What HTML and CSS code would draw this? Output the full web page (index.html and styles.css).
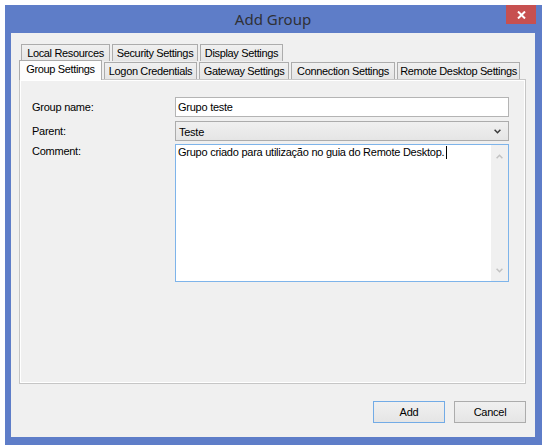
FILE: index.html
```html
<!DOCTYPE html>
<html>
<head>
<meta charset="utf-8">
<link rel="stylesheet" href="styles.css">
</head>
<body>
<div class="window">
  <div class="titlebar">
    <div class="title">Add Group</div>
    <div class="close">
      <svg width="9" height="8" viewBox="0 0 9 8"><path d="M1 0.5 L8 7.5 M8 0.5 L1 7.5" stroke="#fff" stroke-width="2" fill="none"/></svg>
    </div>
  </div>
  <div class="client">
    <div class="tabrow row1">
      <div class="tab w-local">Local Resources</div>
      <div class="tab w-sec">Security Settings</div>
      <div class="tab w-disp">Display Settings</div>
    </div>
    <div class="tabrow row2">
      <div class="tab sel w-group">Group Settings</div>
      <div class="tab w-logon">Logon Credentials</div>
      <div class="tab w-gate">Gateway Settings</div>
      <div class="tab w-conn">Connection Settings</div>
      <div class="tab w-remote">Remote Desktop Settings</div>
    </div>
    <div class="panel">
      <div class="form">
        <div class="lbl">Group name:</div>
        <div class="textbox">Grupo teste</div>
        <div class="lbl">Parent:</div>
        <div class="combo"><span>Teste</span>
          <svg width="7" height="5" viewBox="0 0 7 5"><polyline points="0.6,0.8 3.5,3.7 6.4,0.8" stroke="#3a3a3a" stroke-width="1.5" fill="none"/></svg>
        </div>
        <div class="lbl lbl-top">Comment:</div>
        <div class="textarea">
          <div class="ta-text">Grupo criado para utilização no guia do Remote Desktop.<span class="caret"></span></div>
          <div class="vscroll">
            <svg width="7" height="5" viewBox="0 0 7 5"><polyline points="0.6,4.2 3.5,1.3 6.4,4.2" stroke="#c2c2c2" stroke-width="1.5" fill="none"/></svg>
            <svg width="7" height="5" viewBox="0 0 7 5"><polyline points="0.6,0.8 3.5,3.7 6.4,0.8" stroke="#c2c2c2" stroke-width="1.5" fill="none"/></svg>
          </div>
        </div>
      </div>
    </div>
    <div class="buttons">
      <div class="btn default">Add</div>
      <div class="btn">Cancel</div>
    </div>
  </div>
</div>
</body>
</html>
```
FILE: styles.css
```css
html, body {
  margin: 0;
  background: #ffffff;
}
body {
  font-family: "Liberation Sans", Arial, sans-serif;
  font-size: 11px;
  letter-spacing: -0.25px;
  color: #000;
}
.window {
  margin: 5px 0 0 5px;
  width: 537px;
  height: 440px;
  box-sizing: border-box;
  background: #5e7dc8;
  padding: 0 7px 8px 6px;
  display: flex;
  flex-direction: column;
}
.titlebar {
  height: 28px;
  flex: none;
  display: grid;
  grid-template-columns: 1fr auto 1fr;
}
.title {
  grid-column: 2;
  line-height: 28px;
  font-family: "Noto Sans", "Liberation Sans", sans-serif;
  font-size: 15px;
  letter-spacing: 0;
  color: #2f3036;
}
.close {
  grid-column: 3;
  justify-self: end;
  align-self: start;
  margin-right: -1px;
  width: 30px;
  height: 19px;
  background: #c75050;
  display: flex;
  align-items: center;
  justify-content: center;
}
.client {
  flex: 1;
  background: #f0f0f0;
  padding: 11px 9px 14px 8px;
  display: flex;
  flex-direction: column;
}
.tabrow {
  display: flex;
  gap: 2px;
  height: 17px;
  flex: none;
}
.row1 {
  padding-left: 2px;
  margin-bottom: 1px;
}
.row2 {
  align-items: flex-end;
  position: relative;
  z-index: 2;
}
.tab {
  box-sizing: border-box;
  height: 17px;
  border: 1px solid #acacac;
  border-bottom: none;
  background: linear-gradient(#f0f0f0, #e5e5e5);
  text-align: center;
  line-height: 16px;
  white-space: nowrap;
  letter-spacing: -0.35px;
}
.tab.sel {
  height: 20px;
  margin-bottom: -1px;
  background: #fdfdfd;
  line-height: 17px;
}
.w-local { width: 89px; }
.w-sec { width: 86px; }
.w-disp { width: 83px; }
.w-group { width: 83px; }
.w-logon { width: 93px; }
.w-gate { width: 90px; }
.w-conn { width: 104px; }
.w-remote { width: 123px; }
.panel {
  box-sizing: border-box;
  width: 507px;
  height: 305px;
  flex: none;
  border: 1px solid #c6c6c6;
  box-shadow: inset 0 0 0 1px #ffffff;
  padding: 17px 0 0 12px;
}
.form {
  display: grid;
  grid-template-columns: 143px 334px;
  grid-template-rows: 20px 20px 137px;
  row-gap: 4px;
}
.lbl {
  align-self: center;
  line-height: 13px;
}
.lbl-top {
  align-self: start;
  margin-top: 0;
}
.textbox {
  box-sizing: border-box;
  border: 1px solid #b4b4b4;
  background: #fff;
  padding-left: 2px;
  line-height: 18px;
}
.combo {
  box-sizing: border-box;
  border: 1px solid #acacac;
  background: linear-gradient(#f0f0f0, #e5e5e5);
  display: flex;
  align-items: center;
  justify-content: space-between;
  padding: 1px 7px 0 3px;
}
.combo svg {
  margin-top: -1px;
}
.textarea {
  box-sizing: border-box;
  margin-top: -1px;
  border: 1px solid #7eb4ea;
  background: #fff;
  display: flex;
}
.ta-text {
  flex: 1;
  padding: 1px 0 0 2px;
  line-height: 13px;
}
.caret {
  display: inline-block;
  width: 1px;
  height: 13px;
  background: #000;
  margin-left: 2px;
  vertical-align: -3px;
}
.vscroll {
  width: 17px;
  background: #f0f0f0;
  display: flex;
  flex-direction: column;
  justify-content: space-between;
  align-items: center;
  padding: 9px 0 8px;
}
.buttons {
  display: flex;
  justify-content: flex-end;
  gap: 9px;
  margin-top: 17px;
  width: 507px;
}
.btn {
  box-sizing: border-box;
  width: 72px;
  height: 22px;
  border: 1px solid #acacac;
  background: linear-gradient(#f0f0f0, #e5e5e5);
  display: flex;
  align-items: center;
  justify-content: center;
}
.btn.default {
  border-color: #72abe6;
}
```
